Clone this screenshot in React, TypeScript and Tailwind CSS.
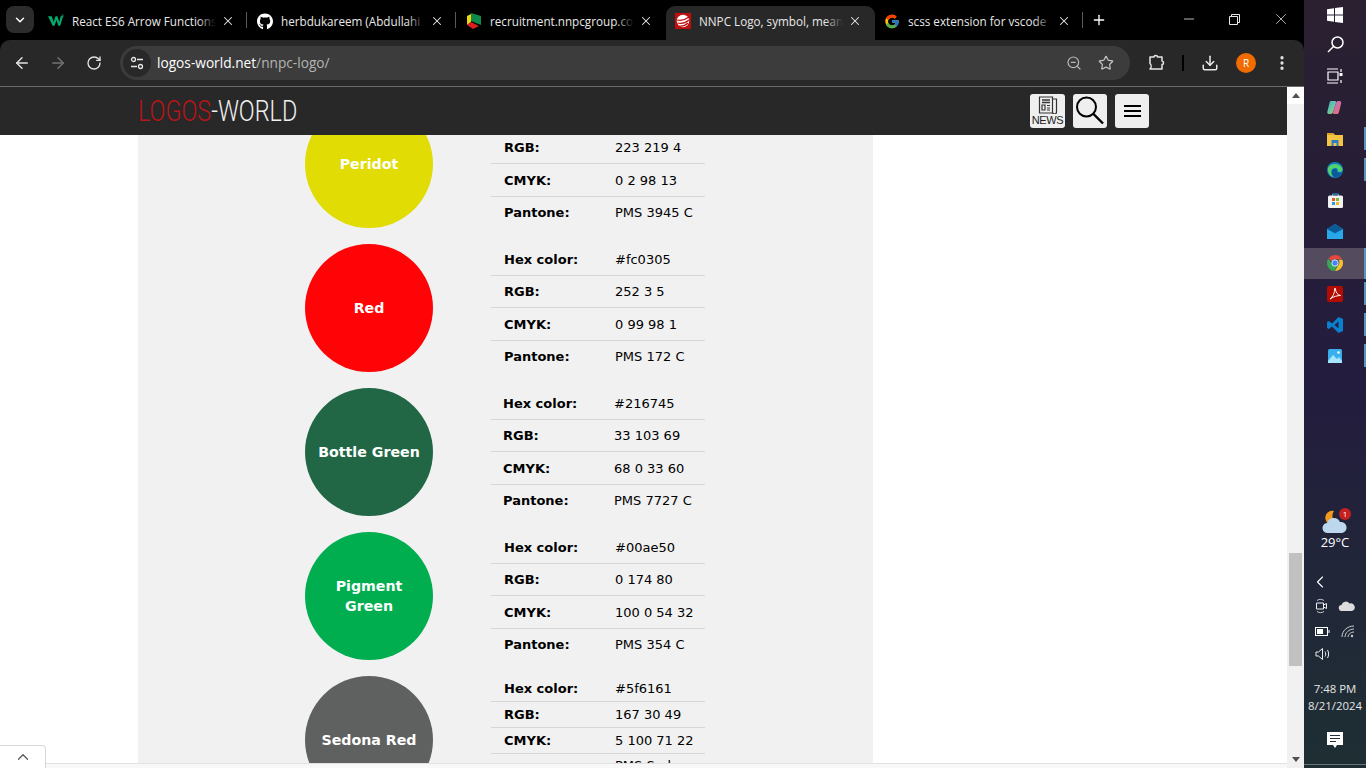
import React from "react";
import { ArrowLeft, ArrowRight, RotateCw, ZoomOut, Star, Download, EllipsisVertical, Plus, X, Minus, ChevronDown, ChevronUp, ChevronLeft } from "lucide-react";
import { FaGithub } from "react-icons/fa";
import { FcGoogle } from "react-icons/fc";

const W3 = () => (
  <svg width="17" height="14" viewBox="0 0 17 14">
    <path d="M0 2h4l2 6 2-6h2l2 6 1.500-6H16l-3 10h-2L9 6l-2 6H5z" fill="#04AA6D" />
    <path d="M14.500 0h2v3h-2z" fill="#04AA6D" opacity="0.6" />
  </svg>
);
const Nnpc = () => (
  <svg width="16" height="18" viewBox="0 0 16 18">
    <path d="M5 1l10 3v9L5 9z" fill="#0f8a4b" />
    <path d="M1 4l4-2v8l-4 3z" fill="#e8d90c" />
    <path d="M1 13l4-3 8 4-6 3z" fill="#d81e1e" />
  </svg>
);
const NnpcRed = () => (
  <svg width="16" height="16" viewBox="0 0 16 16">
    <rect width="16" height="16" fill="#c00d0d" />
    <circle cx="8" cy="8" r="6.200" fill="#fff" />
    <path d="M2 7c4 1 8 0 12-3M2.500 10c4 1 8 0 11.500-3M4 13c3 .5 6 0 9-3" stroke="#c00d0d" strokeWidth="1.200" fill="none" />
  </svg>
);

function Tab({ icon, title, active, sep }: { icon: React.ReactNode; title: string; active?: boolean; sep?: boolean }) {
  return (
    <div className={`relative flex h-[34px] w-[209px] shrink-0 items-center pb-[4px] pl-[9px] pr-[10px] ${active ? "rounded-t-[9px] bg-[#282828]" : ""}`}>
      <div className="flex w-[16px] shrink-0 items-center justify-center">{icon}</div>
      <div className="relative ml-[8px] h-[18px] w-[144px] overflow-hidden whitespace-nowrap text-[11.7px] leading-[18px] text-[#e8e8e8]">
        {title}
        <span className={`absolute right-0 top-0 h-full w-[18px] bg-gradient-to-l ${active ? "from-[#282828]" : "from-black"} to-transparent`} />
      </div>
      <X size={14} strokeWidth={1.800} className="ml-[5px] shrink-0 text-[#e8e8e8]" />
      {sep && <span className="absolute right-[1px] top-[6px] h-[16px] w-px bg-[#5a5a5a]" />}
    </div>
  );
}

function TuneIcon() {
  return (
    <svg width="14" height="14" viewBox="0 0 14 14" fill="none" stroke="#e8e8e8" strokeWidth="1.300">
      <circle cx="3.500" cy="3.500" r="2" />
      <path d="M7 3.500h6M1 10.500h6" />
      <circle cx="10.500" cy="10.500" r="2" />
    </svg>
  );
}

function Extensions() {
  return (
    <svg width="18" height="18" viewBox="0 0 18 18" fill="none" stroke="#e8e8e8" strokeWidth="1.500" strokeLinejoin="round">
      <path d="M2 3h4c0-2 3.500-2 3.500 0H14v4c2 0 2 3.500 0 3.500V15H2c1.500-1.500 1.500-4 0-5.500z" />
    </svg>
  );
}

type Row = { l: string; v: string };
type Sw = { name: React.ReactNode; color: string; rows: Row[]; shift?: boolean; compact?: boolean };

const swatches: Sw[] = [
  { name: "Peridot", color: "#e0dc04", rows: [{ l: "Hex color:", v: "#dfdb04" }, { l: "RGB:", v: "223 219 4" }, { l: "CMYK:", v: "0 2 98 13" }, { l: "Pantone:", v: "PMS 3945 C" }] },
  { name: "Red", color: "#ff0306", rows: [{ l: "Hex color:", v: "#fc0305" }, { l: "RGB:", v: "252 3 5" }, { l: "CMYK:", v: "0 99 98 1" }, { l: "Pantone:", v: "PMS 172 C" }] },
  { name: "Bottle Green", color: "#216745", shift: true, rows: [{ l: "Hex color:", v: "#216745" }, { l: "RGB:", v: "33 103 69" }, { l: "CMYK:", v: "68 0 33 60" }, { l: "Pantone:", v: "PMS 7727 C" }] },
  { name: <>Pigment<br />Green</>, color: "#00ae50", rows: [{ l: "Hex color:", v: "#00ae50" }, { l: "RGB:", v: "0 174 80" }, { l: "CMYK:", v: "100 0 54 32" }, { l: "Pantone:", v: "PMS 354 C" }] },
  { name: "Sedona Red", color: "#5f6161", compact: true, rows: [{ l: "Hex color:", v: "#5f6161" }, { l: "RGB:", v: "167 30 49" }, { l: "CMYK:", v: "5 100 71 22" }, { l: "Pantone:", v: "PMS Sedona Red" }] },
];

const heights = ["h-[32px]", "h-[32px]", "h-[33px] pt-[1px]", "h-[32px]"];

function Swatch({ s }: { s: Sw }) {
  return (
    <div className="mb-[16px] flex h-[128px]">
      <div className="flex h-[128px] w-[128px] shrink-0 items-center justify-center rounded-full text-center text-[14.2px] font-bold leading-[20px] text-white" style={{ backgroundColor: s.color }}>
        <span>{s.name}</span>
      </div>
      <div className="ml-[58px] w-[214px] text-[13px] text-black">
        {s.rows.map((r, i) => (
          <div
            key={i}
            className={`flex ${s.compact ? (i === 3 ? "items-center pt-[2px]" : "h-[26px] items-center") : heights[i] + " items-center"} ${i < 3 ? "border-b border-[#d6d6d6]" : ""} ${s.shift ? "pl-[12px]" : "pl-[13px]"}`}
          >
            <span className="w-[111px] shrink-0 font-bold">{r.l}</span>
            <span>{r.v}</span>
          </div>
        ))}
      </div>
    </div>
  );
}

function TaskRow({ children, active, ind }: { children: React.ReactNode; active?: boolean; ind?: boolean }) {
  return (
    <div className={`relative flex h-[31px] w-full shrink-0 items-center justify-center pb-[2px] ${active ? "bg-[#544c5e]" : ""}`}>
      {children}
      {ind && <span className={`absolute right-0 w-[2px] bg-[#5b93ba] ${active ? "top-0 h-full" : "top-[3px] h-[23px]"}`} />}
    </div>
  );
}

export default function App() {
  return (
    <div className="flex h-[768px] w-[1366px] overflow-hidden bg-black font-['Open_Sans',sans-serif]">
      <div className="flex h-full w-[1304px] shrink-0 flex-col">
        {/* Tab strip */}
        <div className="flex h-[40px] shrink-0 items-end bg-black">
          <div className="mb-[7px] ml-[6px] mr-[5px] flex h-[27px] w-[28px] shrink-0 items-center justify-center rounded-[8px] bg-[#2c2c2c] text-white">
            <ChevronDown size={14} strokeWidth={2.500} />
          </div>
          <Tab icon={<W3 />} title="React ES6 Arrow Functions" sep />
          <Tab icon={<FaGithub size={17} color="#fff" />} title="herbdukareem (Abdullahi Abdulkareem)" sep />
          <Tab icon={<Nnpc />} title="recruitment.nnpcgroup.com" />
          <Tab icon={<NnpcRed />} title="NNPC Logo, symbol, meaning" active />
          <Tab icon={<FcGoogle size={17} />} title="scss extension for vscode" sep />
          <Plus size={16} strokeWidth={2} className="mb-[12px] ml-[7px] shrink-0 text-white" />
          <div className="mb-[12px] ml-auto flex items-center text-[#e8e8e8]">
            <Minus size={16} strokeWidth={1.200} />
            <div className="ml-[29px] flex h-[16px] w-[16px] items-center justify-center">
              <svg width="11" height="11" viewBox="0 0 11 11" fill="none" stroke="#e8e8e8"><path d="M.5 2.500h8v8h-8zM2.500 2.500v-2h8v8h-2" /></svg>
            </div>
            <X size={18} strokeWidth={1} className="ml-[30px] mr-[14px]" />
          </div>
        </div>

        {/* Toolbar */}
        <div className="flex h-[46px] shrink-0 items-center rounded-tl-[10px] rounded-tr-[10px] bg-[#282828] pl-[13px]">
          <ArrowLeft size={18} strokeWidth={2} className="text-[#e3e3e3]" />
          <ArrowRight size={18} strokeWidth={2} className="ml-[18px] text-[#737373]" />
          <RotateCw size={16} strokeWidth={2} className="ml-[19px] text-[#e3e3e3]" />
          <div className="ml-[18px] flex h-[34px] w-[1010px] items-center rounded-full bg-[#3c3c3c] pl-[3px] pr-[16px]">
            <div className="flex h-[28px] w-[28px] items-center justify-center rounded-full bg-[#282828]"><TuneIcon /></div>
            <div className="ml-[6px] text-[13.7px] text-white">logos-world.net<span className="text-[#b4b4b4]">/nnpc-logo/</span></div>
            <ZoomOut size={16} strokeWidth={1.800} className="ml-auto text-[#b8b8b8]" />
            <Star size={16} strokeWidth={1.800} className="ml-[16px] text-[#c4c4c4]" />
          </div>
          <div className="ml-[18px]"><Extensions /></div>
          <span className="ml-[16px] h-[16px] w-[2px] bg-black" />
          <Download size={18} strokeWidth={2} className="ml-[17px] text-[#e8e8e8]" />
          <div className="ml-[17px] flex h-[20px] w-[20px] items-center justify-center rounded-full bg-[#f06c00] text-[10px] text-white">R</div>
          <EllipsisVertical size={18} strokeWidth={2.400} className="ml-[17px] text-[#e3e3e3]" />
        </div>
        <div className="h-px shrink-0 bg-[#6a6a6a]" />

        {/* Viewport */}
        <div className="flex min-h-0 flex-1">
          <div className="relative flex min-w-0 flex-1 flex-col bg-white">
            <header className="z-10 flex h-[48px] shrink-0 items-center bg-[#282828] pl-[138px]">
              <div className="origin-left scale-x-[0.78] whitespace-nowrap font-['Roboto',sans-serif] text-[30px] font-light leading-none">
                <span className="text-[#b8141a]">LOGOS</span><span className="text-[#f0f0f0]">-WORLD</span>
              </div>
              <div className="ml-auto mr-[138px] flex items-center">
                <div className="flex h-[34px] w-[35px] flex-col items-center rounded-[3px] bg-[#efefef] pt-[2px]">
                  <svg width="22" height="18" viewBox="0 0 22 18" fill="none" stroke="#333" strokeWidth="1.200">
                    <path d="M2.500 1h13v16h-13zM15.500 3h4v13a1.500 1.500 0 0 1-4 0" />
                    <path d="M5 4h8M5 6.500h8" strokeWidth="1.500" />
                    <path d="M5 9h3v5H5zM10 9.500h3M10 12h3M10 14h3" />
                  </svg>
                  <span className="font-['Liberation_Sans',sans-serif] text-[11px] leading-[12px] tracking-[-0.4px] text-[#222]">NEWS</span>
                </div>
                <div className="ml-[8px] flex h-[34px] w-[34px] items-center justify-center rounded-[3px] bg-[#efefef]">
                  <svg width="34" height="34" viewBox="0 0 34 34" fill="none" stroke="#000" strokeWidth="2">
                    <circle cx="13.500" cy="13" r="9.500" />
                    <path d="M20.500 20L30 29.500" strokeWidth="2.400" />
                  </svg>
                </div>
                <div className="ml-[8px] flex h-[34px] w-[34px] flex-col items-center justify-center gap-[3px] rounded-[3px] bg-[#efefef]">
                  <span className="h-[2px] w-[17px] bg-black" />
                  <span className="h-[2px] w-[17px] bg-black" />
                  <span className="h-[2px] w-[17px] bg-black" />
                </div>
              </div>
            </header>
            <div className="min-h-0 flex-1 overflow-hidden font-['DejaVu_Sans',sans-serif]">
              <div className="-mt-[35px] ml-[138px] h-[800px] w-[735px] bg-[#f1f1f1] pl-[167px]">
                {swatches.map((s, i) => <Swatch key={i} s={s} />)}
              </div>
            </div>
            {/* Collapsed bottom banner */}
            <div className="absolute bottom-0 left-0 h-[5px] w-full border-t border-[#e2e2e2] bg-[#f8f8f8]" />
            <div className="absolute bottom-0 left-0 flex h-[23px] w-[46px] items-center justify-center rounded-tr-[4px] border-r border-t border-[#d8d8d8] bg-white text-[#555]">
              <ChevronUp size={18} strokeWidth={1.600} />
            </div>
          </div>
          {/* Scrollbar */}
          <div className="flex w-[17px] shrink-0 flex-col items-center bg-[#f1f1f1]">
            <div className="flex h-[17px] w-full items-center justify-center bg-white">
              <span className="h-0 w-0 border-x-[4px] border-b-[5px] border-x-transparent border-b-[#505050]" />
            </div>
            <div className="mt-[449px] h-[113px] w-[13px] bg-[#c1c1c1]" />
            <div className="mt-auto flex h-[17px] w-full items-center justify-center">
              <span className="h-0 w-0 border-x-[4px] border-t-[5px] border-x-transparent border-t-[#505050]" />
            </div>
          </div>
        </div>
      </div>

      {/* Taskbar */}
      <aside className="flex h-full w-[62px] shrink-0 flex-col items-center bg-gradient-to-b from-[#2a2030] via-[#231c3e] to-[#1e2f33] text-white">
        <TaskRow>
          <svg width="16" height="16" viewBox="0 0 16 16" fill="#fff"><path d="M0 2.200l7-1v6.300H0zM8 1l8-1v7.500H8zM0 8.500h7v6.300l-7-1zM8 8.500h8V16l-8-1z" /></svg>
        </TaskRow>
        <TaskRow>
          <svg className="-mt-[2px]" width="17" height="17" viewBox="0 0 17 17" fill="none" stroke="#fff" strokeWidth="1.500"><circle cx="10.500" cy="6.500" r="5.500" /><path d="M6.500 10.500L1 16" /></svg>
        </TaskRow>
        <TaskRow>
          <svg className="-mt-[2px]" width="16" height="16" viewBox="0 0 16 16" fill="none" stroke="#fff" strokeWidth="1.200"><path d="M0 1h11M0 15h11M1 4h10v8H1zM14 1v3M14 12v3" /><rect x="12.500" y="5" width="3" height="3" fill="#fff" stroke="none" /></svg>
        </TaskRow>
        <TaskRow>
          <svg width="16" height="15" viewBox="0 0 16 15"><defs><linearGradient id="cpa" x1="0" y1="0" x2="1" y2="1"><stop offset="0" stopColor="#35b3d8" /><stop offset="1" stopColor="#a6d36a" /></linearGradient><linearGradient id="cpb" x1="0" y1="0" x2="1" y2="1"><stop offset="0" stopColor="#b06ae0" /><stop offset="1" stopColor="#f2745c" /></linearGradient></defs><path d="M4 1h4c1 0 1.500 1 1 2L6 12c-.5 1.500-1.500 2-2.500 2H2c-1.500 0-2-1-1.600-2.500L2.500 3C3 1.500 3 1 4 1z" fill="url(#cpa)" /><path d="M11 1h1.500c1.500 0 2 1 1.600 2.500L12 12c-.5 1.500-1 2-2 2H7c-1 0-1.500-1-1-2l3-9c.5-1.500 1-2 2-2z" fill="url(#cpb)" /></svg>
        </TaskRow>
        <TaskRow ind>
          <svg width="16" height="14" viewBox="0 0 16 14"><path d="M0 1h6l2 2h8v11H0z" fill="#f5c542" /><path d="M0 1h6l2 2H0z" fill="#d9a325" /><rect x="4.500" y="8" width="7" height="6" fill="#2a7fc9" /><rect x="6.500" y="11" width="3" height="3" fill="#f5c542" /></svg>
        </TaskRow>
        <TaskRow ind>
          <svg width="16" height="16" viewBox="0 0 16 16"><circle cx="8" cy="8" r="8" fill="#0f7fc4" /><path d="M1 6C3 1 13 0 15.500 7c.5 3-3 3.500-5 2.500C12 7 9 5 6 6.500 3 8 4 13 8 15 4 15.500 0 11 1 6z" fill="#52d06a" /><path d="M5 9c1-3 5-3 5 0 0 2 3 2 5 1-1 4-5 6-8 5-2-1-3-4-2-6z" fill="#0a5a9c" /></svg>
        </TaskRow>
        <TaskRow>
          <svg width="15" height="15" viewBox="0 0 15 15"><path d="M4.500 3V1h6v2" fill="none" stroke="#3fa9e8" /><rect y="2.500" width="15" height="12.500" rx="1.500" fill="#f2f2f2" /><rect x="4" y="5" width="3" height="3" fill="#e05a2b" /><rect x="8" y="5" width="3" height="3" fill="#7eba2e" /><rect x="4" y="9" width="3" height="3" fill="#2e9ae0" /><rect x="8" y="9" width="3" height="3" fill="#f2b822" /></svg>
        </TaskRow>
        <TaskRow>
          <svg width="16" height="15" viewBox="0 0 16 15"><path d="M0 5l8-5 8 5v10H0z" fill="#1490df" /><path d="M0 5l8 5 8-5v10H0z" fill="#28a8ea" /><path d="M0 5l8-5 8 5-8 4z" fill="#0c5a94" /></svg>
        </TaskRow>
        <TaskRow active ind>
          <svg width="16" height="16" viewBox="0 0 16 16"><path d="M8 0a8 8 0 0 1 7 4H8a4 4 0 0 0-3.600 2.200L1.800 3A8 8 0 0 1 8 0z" fill="#e8453c" /><path d="M15.300 4.800A8 8 0 0 1 8 16l3.400-6a4 4 0 0 0 0-5.200z" fill="#fbc02d" /><path d="M1.300 3.600A8 8 0 0 0 7.400 16l3.200-5.600a4 4 0 0 1-5.800-1.600z" fill="#34a853" /><circle cx="8" cy="8" r="3.200" fill="#3f83f4" stroke="#fff" strokeWidth="0.800" /></svg>
        </TaskRow>
        <TaskRow ind>
          <svg width="16" height="16" viewBox="0 0 16 16"><rect width="16" height="16" rx="2" fill="#b30b00" /><path d="M3 13c3-2 5-7 4.500-10 0-1 1-1 1 0 0 3 2 6 5 6.500-3 0-7 1-10.500 3.500z" fill="none" stroke="#fff" strokeWidth="1" /></svg>
        </TaskRow>
        <TaskRow ind>
          <svg width="16" height="16" viewBox="0 0 16 16"><path d="M11.500 0L16 2v12l-4.500 2L5 9.500 2 12 0 11V5l2-1 3 2.500z" fill="#0a7fce" /><path d="M11.500 4.500L7.500 8l4 3.500z" fill="#1f2140" /></svg>
        </TaskRow>
        <TaskRow ind>
          <svg width="14" height="14" viewBox="0 0 14 14"><rect width="14" height="14" rx="1.500" fill="#39b0ee" /><path d="M0 12l5-6 4 4 2-2 3 4v2H0z" fill="#a6e4fb" /><circle cx="10.500" cy="3.500" r="1.300" fill="#fff" /></svg>
        </TaskRow>

        <div className="mt-[138px] flex h-[24px] w-full shrink-0 items-center justify-center">
          <div className="relative h-[24px] w-[26px]">
            <svg width="26" height="24" viewBox="0 0 26 24">
              <path d="M12 1a7 7 0 1 0 3 12 8 8 0 0 1-3-12z" fill="#f29a1f" />
              <path d="M6 23a5 5 0 0 1-1-10 7 7 0 0 1 13-1 5.500 5.500 0 0 1 2 11z" fill="#bcd7ee" />
            </svg>
            <span className="absolute right-[-3px] top-[-2px] flex h-[12px] w-[12px] items-center justify-center rounded-full bg-[#c4201f] text-[8px] leading-none text-white">1</span>
          </div>
        </div>
        <div className="-mt-[1px] text-[13px] leading-[18px]">29°C</div>
        <ChevronLeft size={20} strokeWidth={1.300} className="ml-[-30px] mt-[21px]" />
        <div className="mt-[2px] flex h-[24px] w-[40px] items-center justify-between">
          <svg width="13" height="16" viewBox="0 0 13 16" fill="none" stroke="#eee"><path d="M1.500 5h7v6h-7zM8.500 7l3-1.500v5l-3-1.500" /><path d="M2 2.500c2-1.500 5-1.500 7 0M2 13.500c2 1.500 5 1.500 7 0" strokeWidth="0.800" /></svg>
          <svg width="17" height="10" viewBox="0 0 17 10" fill="#ddd"><path d="M4 10a3 3 0 0 1-.5-6 4.500 4.500 0 0 1 8-1.500A3.500 3.500 0 0 1 14 10z" /></svg>
        </div>
        <div className="mt-[1px] flex h-[24px] w-[40px] items-center justify-between">
          <svg width="15" height="9" viewBox="0 0 15 9" fill="none" stroke="#fff"><rect x="0.500" y="0.500" width="12" height="8" /><rect x="2" y="2" width="6" height="5" fill="#fff" stroke="none" /><path d="M14 3v3" /></svg>
          <svg width="14" height="13" viewBox="0 0 14 13" fill="none" stroke="#ccc"><path d="M1 12C1 6 6 1 13 1M4 12c0-4 4-8 9-8M7 12c0-2.500 3-5 6-5" /><circle cx="11" cy="11" r="1.200" fill="#ccc" stroke="none" /></svg>
        </div>
        <div className="mt-[-1px] flex h-[24px] w-[40px] items-center">
          <svg width="17" height="14" viewBox="0 0 17 14" fill="none" stroke="#eee"><path d="M1 5h2.500L7.500 1.500v11L3.500 9H1zM10 4.500c1 1.500 1 3.500 0 5M12.500 3c1.500 2.500 1.500 5.500 0 8" /></svg>
        </div>
        <div className="mt-[14px] text-center text-[11.4px] leading-[17px] text-[#e4e4e4]">7:48 PM<br />8/21/2024</div>
        <div className="mt-[18px]">
          <svg width="16" height="17" viewBox="0 0 16 17"><path d="M0 0h16v13H10l-2 3-2-3H0z" fill="#fff" /><path d="M3 3.500h10M3 6.500h10M3 9.500h6" stroke="#24303a" /></svg>
        </div>
        <div className="mt-[15px] h-px w-full bg-[#6a7378]" />
      </aside>
    </div>
  );
}
